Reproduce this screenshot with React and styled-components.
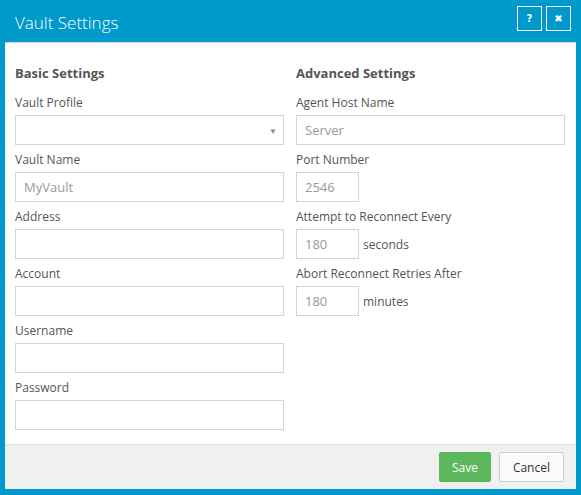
import React from "react";
import styled, { createGlobalStyle } from "styled-components";

const GlobalStyle = createGlobalStyle`
  html, body {
    margin: 0;
    padding: 0;
    background: #ffffff;
  }
  body {
    font-family: "Open Sans", "Liberation Sans", sans-serif;
    font-size: 12px;
  }
`;

const Dialog = styled.div`
  width: 581px;
  height: 495px;
  box-sizing: border-box;
  background-color: #0099cc;
  padding: 0 5px 6px 5px;
  display: flex;
  flex-direction: column;
`;

const Header = styled.div`
  height: 42px;
  display: flex;
  align-items: flex-start;
  justify-content: space-between;
  padding: 0 5px 0 10px;
  box-sizing: border-box;
`;

const Title = styled.h1`
  margin: 11px 0 0 0;
  font-size: 17px;
  line-height: 24px;
  font-weight: 300;
  color: #ffffff;
`;

const HeaderButtons = styled.div`
  display: flex;
  gap: 4px;
  margin-top: 6px;
`;

const IconButton = styled.button`
  width: 25px;
  height: 25px;
  box-sizing: border-box;
  border: 1px solid #ffffff;
  background: transparent;
  color: #ffffff;
  font-family: "DejaVu Sans", sans-serif;
  font-weight: bold;
  font-size: 10px;
  display: flex;
  align-items: center;
  justify-content: center;
  padding: 0;
  cursor: pointer;
`;

const Body = styled.div`
  flex: 1;
  background: #ffffff;
  border-top: 1px solid #d8d8d8;
  padding: 20px 11px 0 10px;
  display: grid;
  grid-template-columns: 269px 269px;
  column-gap: 12px;
`;

const Column = styled.div`
  display: flex;
  flex-direction: column;
`;

const Heading = styled.h2`
  margin: 0 0 10px 0;
  font-size: 13px;
  line-height: 20px;
  font-weight: 700;
  color: #555555;
`;

const Field = styled.div`
  display: flex;
  flex-direction: column;
  margin-bottom: 5px;
`;

const Label = styled.label`
  color: #555555;
  line-height: 17px;
  padding-top: 1px;
  margin-bottom: 4px;
`;

const Input = styled.input`
  box-sizing: border-box;
  width: ${(p) => (p.$small ? "63px" : "100%")};
  height: 30px;
  border: 1px solid #d4d4d4;
  padding: 0 8px;
  font-family: inherit;
  font-size: 13px;
  color: #999999;
  outline: none;
  &::placeholder {
    color: #999999;
  }
`;

const SelectBox = styled.div`
  box-sizing: border-box;
  height: 30px;
  border: 1px solid #d4d4d4;
  display: flex;
  align-items: center;
  justify-content: flex-end;
  padding-right: 6px;
  color: #888888;
  font-size: 8px;
`;

const InlineRow = styled.div`
  display: flex;
  align-items: center;
  gap: 4px;
`;

const Unit = styled.span`
  color: #555555;
`;

const Footer = styled.div`
  height: 44px;
  background: #f0f0f0;
  border-top: 1px solid #dcdcdc;
  display: flex;
  align-items: center;
  justify-content: flex-end;
  gap: 8px;
  padding-right: 12px;
`;

const Button = styled.button`
  height: 30px;
  box-sizing: border-box;
  font-family: "Open Sans", sans-serif;
  font-size: 12px;
  padding: 0 ${(p) => (p.$primary ? "12px" : "13px")};
  border: 1px solid ${(p) => (p.$primary ? "#5cb85c" : "#cccccc")};
  background: ${(p) => (p.$primary ? "#5cb85c" : "#fafafa")};
  color: ${(p) => (p.$primary ? "#ffffff" : "#333333")};
  border-radius: 2px;
  cursor: pointer;
`;

const basic = ["Vault Name", "Address", "Account", "Username", "Password"];
const values = { "Vault Name": "MyVault" };

export default function App() {
  return (
    <>
      <GlobalStyle />
      <Dialog>
        <Header>
          <Title>Vault Settings</Title>
          <HeaderButtons>
            <IconButton>?</IconButton>
            <IconButton>✖</IconButton>
          </HeaderButtons>
        </Header>
        <Body>
          <Column>
            <Heading>Basic Settings</Heading>
            <Field>
              <Label>Vault Profile</Label>
              <SelectBox>▼</SelectBox>
            </Field>
            {basic.map((name) => (
              <Field key={name}>
                <Label>{name}</Label>
                <Input
                  type={name === "Password" ? "password" : "text"}
                  placeholder={values[name] || ""}
                />
              </Field>
            ))}
          </Column>
          <Column>
            <Heading>Advanced Settings</Heading>
            <Field>
              <Label>Agent Host Name</Label>
              <Input placeholder="Server" />
            </Field>
            <Field>
              <Label>Port Number</Label>
              <Input $small placeholder="2546" />
            </Field>
            <Field>
              <Label>Attempt to Reconnect Every</Label>
              <InlineRow>
                <Input $small placeholder="180" />
                <Unit>seconds</Unit>
              </InlineRow>
            </Field>
            <Field>
              <Label>Abort Reconnect Retries After</Label>
              <InlineRow>
                <Input $small placeholder="180" />
                <Unit>minutes</Unit>
              </InlineRow>
            </Field>
          </Column>
        </Body>
        <Footer>
          <Button $primary>Save</Button>
          <Button>Cancel</Button>
        </Footer>
      </Dialog>
    </>
  );
}
